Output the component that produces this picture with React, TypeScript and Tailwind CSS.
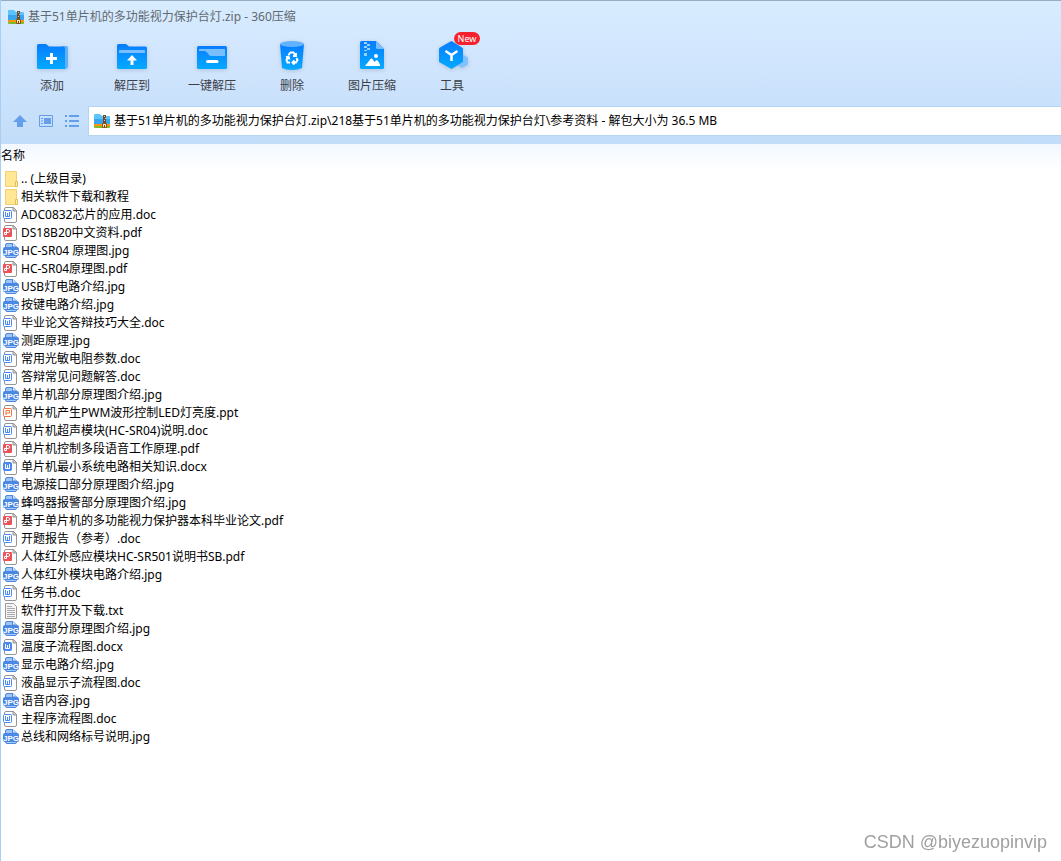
import React from "react";

type FileKind = "folder" | "doc" | "docx" | "pdf" | "jpg" | "ppt" | "txt";

const files: { name: string; kind: FileKind }[] = [
  { name: ".. (上级目录)", kind: "folder" },
  { name: "相关软件下载和教程", kind: "folder" },
  { name: "ADC0832芯片的应用.doc", kind: "doc" },
  { name: "DS18B20中文资料.pdf", kind: "pdf" },
  { name: "HC-SR04 原理图.jpg", kind: "jpg" },
  { name: "HC-SR04原理图.pdf", kind: "pdf" },
  { name: "USB灯电路介绍.jpg", kind: "jpg" },
  { name: "按键电路介绍.jpg", kind: "jpg" },
  { name: "毕业论文答辩技巧大全.doc", kind: "doc" },
  { name: "测距原理.jpg", kind: "jpg" },
  { name: "常用光敏电阻参数.doc", kind: "doc" },
  { name: "答辩常见问题解答.doc", kind: "doc" },
  { name: "单片机部分原理图介绍.jpg", kind: "jpg" },
  { name: "单片机产生PWM波形控制LED灯亮度.ppt", kind: "ppt" },
  { name: "单片机超声模块(HC-SR04)说明.doc", kind: "doc" },
  { name: "单片机控制多段语音工作原理.pdf", kind: "pdf" },
  { name: "单片机最小系统电路相关知识.docx", kind: "docx" },
  { name: "电源接口部分原理图介绍.jpg", kind: "jpg" },
  { name: "蜂鸣器报警部分原理图介绍.jpg", kind: "jpg" },
  { name: "基于单片机的多功能视力保护器本科毕业论文.pdf", kind: "pdf" },
  { name: "开题报告（参考）.doc", kind: "doc" },
  { name: "人体红外感应模块HC-SR501说明书SB.pdf", kind: "pdf" },
  { name: "人体红外模块电路介绍.jpg", kind: "jpg" },
  { name: "任务书.doc", kind: "doc" },
  { name: "软件打开及下载.txt", kind: "txt" },
  { name: "温度部分原理图介绍.jpg", kind: "jpg" },
  { name: "温度子流程图.docx", kind: "docx" },
  { name: "显示电路介绍.jpg", kind: "jpg" },
  { name: "液晶显示子流程图.doc", kind: "doc" },
  { name: "语音内容.jpg", kind: "jpg" },
  { name: "主程序流程图.doc", kind: "doc" },
  { name: "总线和网络标号说明.jpg", kind: "jpg" },
];

const ZipIcon = () => (
  <svg width="16" height="16" viewBox="0 0 16 16" className="shrink-0" aria-hidden="true">
    <path d="M0 2Q0 1 1 1h5l2 2h7q1 0 1 1v7H0z" fill="#5cc4fa" />
    <path d="M0 6h16v5H0z" fill="#38a5ee" />
    <path d="M0 11h16v2H0z" fill="#f9960f" />
    <path d="M0 13h16v1q0 1-1 1H1q-1 0-1-1z" fill="#84b82c" />
    <path d="M9 2h3v9H9z" fill="#6d4a35" />
    <path d="M10 3h1v1h-1zM11 5h1v1h-1zM10 7h1v1h-1z" fill="#e5c493" />
    <path d="M8.5 10.500h4v4h-4z" fill="#fde7ae" stroke="#8a5216" />
    <path d="M10 12h1v2h-1z" fill="#6b4420" />
  </svg>
);

const Page = () => (
  <>
    <path d="M3 .5h7.500l3 3v10.500q0 1.500-1.500 1.500H3Q1.500 15.500 1.500 14V2Q1.500 .5 3 .5z" fill="#fff" stroke="#959595" />
    <path d="M10 .5h.5l3 3V4H10z" fill="#d0d0d0" stroke="#959595" />
  </>
);

const FileIcon = ({ kind }: { kind: FileKind }) => (
  <svg width="16" height="16" viewBox="0 0 16 16" className="shrink-0" aria-hidden="true">
    {kind === "folder" && (
      <>
        <path d="M2.500 .5h11v15h-11z" fill="#ffe795" stroke="#f0d070" />
        <path d="M12.500 10.500h2v5h-2z" fill="#fff0b5" stroke="#e5bf4c" />
      </>
    )}
    {(kind === "doc" || kind === "docx") && (
      <>
        <Page />
        <rect x=".5" y="3.500" width="8" height="8" rx="1" fill={kind === "doc" ? "#fff" : "#4a8af0"} stroke="#4a8af0" />
        <path d="M2.500 5v4.500h4V5M4.500 6v3" fill="none" stroke={kind === "doc" ? "#4a8af0" : "#fff"} />
      </>
    )}
    {kind === "pdf" && (
      <>
        <Page />
        <rect y="3" width="9" height="9" rx="1" fill="#ec545c" />
        <path d="M3.500 4.500h2q1 0 1 1.500t-1 1.500h-4v2h2v-5" fill="none" stroke="#fff" />
      </>
    )}
    {kind === "ppt" && (
      <>
        <Page />
        <rect x=".5" y="3.500" width="8" height="8" rx="1" fill="#fff" stroke="#f0743e" />
        <path d="M3 10V5.500h3.500V8H3" fill="none" stroke="#f0743e" />
      </>
    )}
    {kind === "txt" && (
      <>
        <path d="M2.500 .5h8l3 3v12h-11z" fill="#f6f6f6" stroke="#999" />
        <path d="M4 3.500h5M4 5.500h8M4 7.500h8M4 9.500h8M4 11.500h8M4 13.500h8" stroke="#aaa" />
      </>
    )}
    {kind === "jpg" && (
      <>
        <path d="M2.500 6V2q0-1.500 1.500-1.500h6l3.500 3.500v2" fill="#9fc4f6" stroke="#4c88dd" />
        <path d="M9.500 .5V4h4" fill="#e3eefd" stroke="#4c88dd" />
        <path d="M2.500 12v1q0 1.500 1.500 1.500h8q1.500 0 1.500-1.500v-1" fill="#a8caf7" stroke="#4c88dd" />
        <rect y="4" width="16" height="9" rx="2" fill="#4a88e4" />
        <text x="8" y="12" textAnchor="middle" fill="#fff" className="font-['Liberation_Sans'] text-[8px] font-bold">JPG</text>
      </>
    )}
  </svg>
);

const tools = [
  {
    label: "添加",
    icon: (
      <>
        <path d="M26 6h4q2 0 2 2v18.500q0 2-2 2h-4z" fill="#5eb0fb" />
        <path d="M1 5.500Q1 4 2.500 4H10l3 2.500h14q2 0 2 2V27q0 1 1 2H2.500Q1 29 1 27.500z" fill="url(#blue)" />
        <path d="M15.500 13v11M10 18.500h11" stroke="#fff" strokeWidth="3" />
      </>
    ),
  },
  {
    label: "解压到",
    icon: (
      <>
        <path d="M1 5.500Q1 4 2.500 4H10l3 2.500h16.500Q31 6.500 31 8v19.500q0 1.500-1.500 1.500h-27Q1 29 1 27.500z" fill="url(#blue)" />
        <path d="M3 13v-2q0-1 1-1h24q1 0 1 1v2z" fill="#79bfff" />
        <path d="M16 15l5 5.500h-3.500V25h-3v-4.500H11z" fill="#fff" />
      </>
    ),
  },
  {
    label: "一键解压",
    icon: (
      <>
        <rect x="1" y="6" width="30" height="23" rx="1.500" fill="url(#blue)" />
        <path d="M3 11V9.500q0-.5.5-.5h25q.5 0 .5.500V16H15q-1 0-2-1l-2-2.500q-1-1.500-2.500-1.500z" fill="#79bfff" />
        <path d="M11.500 21.500h9.500" stroke="#fff" strokeWidth="3" strokeLinecap="round" />
      </>
    ),
  },
  {
    label: "删除",
    icon: (
      <>
        <path d="M4 4h24l-2 24q-4 2-10 2T6 28z" fill="url(#blue)" />
        <ellipse cx="16" cy="4" rx="12" ry="3" fill="#62b2fd" />
        <g fill="none" stroke="#fff" strokeWidth="2">
          <path d="M12.500 15l2-2.500h3l2 3M20 13v3h-3" />
          <path d="M20.500 18l1 2-1.500 2.500h-3M18.500 20.500l-2 2 2 2" />
          <path d="M14 22.500h-2.500L10.500 20l1.500-3M10 17.500l2.500-1 1 3" />
        </g>
      </>
    ),
  },
  {
    label: "图片压缩",
    icon: (
      <>
        <path d="M5.500 1H20l8 8v18.500q0 1.500-1.500 1.500h-21Q4 29 4 27.500v-25Q4 1 5.500 1z" fill="url(#blue)" />
        <path d="M20 1l8 8h-6.500Q20 9 20 7.500z" fill="#79bfff" />
        <path d="M8 2h3v2H8zM11 4h3v2h-3zM8 6h3v2H8zM11 8h3v2h-3zM8 10h3v1H8zM8 13h3v3H8z" fill="#9bd0ff" />
        <path d="M9 26l5.500-7q1-1 2 0l2 3 1.500-1.500q1-.5 2 .5l2 3.500v1.500z" fill="#fff" />
        <circle cx="20" cy="16" r="2" fill="#fff" />
      </>
    ),
  },
  {
    label: "工具",
    badge: "New",
    icon: (
      <>
        <path d="M26 14l6 3.500v7L26 28l-5-3z" fill="#80c2ff" />
        <path d="M14.500 1.500q1-.5 2 0L26 7.500q1 .5 1 1.500v12q0 1-1 1.500L16.500 28.500q-1 .5-2 0L4 22.500Q3 22 3 21V9q0-1 1-1.500z" fill="url(#blue)" />
        <path d="M9.500 11l6 4 6-4M15.500 15v6" fill="none" stroke="#fff" strokeWidth="2.500" />
      </>
    ),
  },
];

const App = () => {
  return (
    <div className="flex min-h-screen flex-col border-l border-[#a9cdf3] bg-white font-['Noto_Sans','Noto_Sans_CJK_SC',sans-serif] text-xs text-black">
      <svg width="0" height="0" className="absolute" aria-hidden="true">
        <defs>
          <linearGradient id="blue" x1="0" y1="0" x2="0" y2="1">
            <stop offset="0" stopColor="#087cff" />
            <stop offset="1" stopColor="#03aaff" />
          </linearGradient>
        </defs>
      </svg>

      <header className="border-t border-[#98abc0] bg-linear-to-b from-[#d8ecff] via-[#cfe4fd] to-[#c2ddf9] pb-2">
        <h1 className="flex h-8 items-center gap-1 pl-[7px] text-[#626970]">
          <ZipIcon />
          <span>基于51单片机的多功能视力保护台灯.zip - 360压缩</span>
        </h1>

        <nav className="flex h-[73px] pt-[7px] pl-[11px]">
          {tools.map((tool) => (
            <button key={tool.label} type="button" className="relative flex w-20 flex-col items-center gap-1 text-[#3d4146]">
              <svg width="32" height="32" viewBox="0 0 32 32" className="drop-shadow-sm" aria-hidden="true">
                {tool.icon}
              </svg>
              <span className="leading-5">{tool.label}</span>
              {tool.badge && (
                <span className="absolute -top-2 left-[42px] flex h-[13px] w-[26px] items-center justify-center rounded-full bg-[#f5222d] text-[9px] text-white">
                  {tool.badge}
                </span>
              )}
            </button>
          ))}
        </nav>

        <div className="flex items-center">
          <div className="flex w-[87px] items-center gap-[10px] pl-[11px] text-[#659eea]">
            <button type="button" aria-label="上一级">
              <svg width="16" height="16" viewBox="0 0 16 16" fill="currentColor">
                <path d="M8 2l7 7h-4v5H5V9H1z" />
              </svg>
            </button>
            <button type="button" aria-label="预览">
              <svg width="16" height="16" viewBox="0 0 16 16" fill="none" stroke="currentColor">
                <path d="M1.500 2.500h13v11h-13z" />
                <path d="M6 5h7v6H6z" fill="currentColor" stroke="none" />
                <path d="M3 5.500h2M3 8h2M3 10.500h2" />
              </svg>
            </button>
            <button type="button" aria-label="列表">
              <svg width="16" height="16" viewBox="0 0 16 16" stroke="currentColor" strokeWidth="2">
                <path d="M1 3h2M5 3h10M1 8h2M5 8h10M1 13h2M5 13h10" />
              </svg>
            </button>
          </div>
          <label className="flex h-[30px] flex-1 items-center gap-1 border-y border-l border-[#b5d3f2] bg-white pl-[5px]">
            <ZipIcon />
            <input
              type="text"
              aria-label="路径"
              className="w-full bg-transparent outline-none"
              defaultValue="基于51单片机的多功能视力保护台灯.zip\218基于51单片机的多功能视力保护台灯\参考资料 - 解包大小为 36.5 MB"
            />
          </label>
        </div>
      </header>

      <main className="flex-1">
        <table className="w-full text-left">
          <thead>
            <tr className="bg-linear-to-b from-[#f2f8ff] to-white">
              <th className="h-[26px] p-0 pb-[3px] font-normal">名称</th>
            </tr>
          </thead>
          <tbody>
            {files.map((file) => (
              <tr key={file.name}>
                <td className="h-[18px] p-0">
                  <div className="flex h-[18px] items-center gap-[2px] pl-[2px] whitespace-nowrap">
                    <FileIcon kind={file.kind} />
                    <span>{file.name}</span>
                  </div>
                </td>
              </tr>
            ))}
          </tbody>
        </table>
      </main>

      <div className="fixed right-[14px] bottom-[5px] font-['Liberation_Sans',sans-serif] text-lg text-[#a0a0a0]">
        CSDN @biyezuopinvip
      </div>
    </div>
  );
};

export default App;
